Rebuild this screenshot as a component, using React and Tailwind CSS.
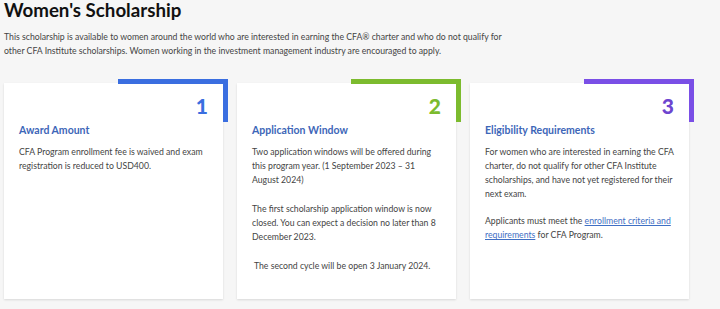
const cards = [
  {
    num: '1',
    title: 'Award Amount',
    accent: 'border-[#3a6ee0]',
    numColor: 'text-[#3a6ee0]',
    body: (
      <p>CFA Program enrollment fee is waived and exam registration is reduced to USD400.</p>
    ),
  },
  {
    num: '2',
    title: 'Application Window',
    accent: 'border-[#7cbb2e]',
    numColor: 'text-[#7cbb2e]',
    body: (
      <>
        <p>Two application windows will be offered during this program year. (1 September 2023 – 31 August 2024)</p>
        <p className="mt-[15px]">The first scholarship application window is now closed. You can expect a decision no later than 8 December 2023.</p>
        <p className="mt-[15px]">&nbsp;The second cycle will be open 3 January 2024.</p>
      </>
    ),
  },
  {
    num: '3',
    title: 'Eligibility Requirements',
    accent: 'border-[#7a4fe6]',
    numColor: 'text-[#6d45cf]',
    body: (
      <>
        <p>For women who are interested in earning the CFA charter, do not qualify for other CFA Institute scholarships, and have not yet registered for their next exam.</p>
        <p className="mt-[13px]">
          Applicants must meet the{' '}
          <a href="#" className="text-[#3f6fc4] underline">enrollment criteria and requirements</a>{' '}
          for CFA Program.
        </p>
      </>
    ),
  },
];

export default function App() {
  return (
    <div className="h-[309px] w-[720px] overflow-hidden bg-[#f6f6f6] font-['Lato',sans-serif]">
      <div className="px-[4px]">
        <h1 className="text-[18.7px] font-bold leading-[20px] text-[#111]">Women's Scholarship</h1>
        <p className="mt-[10px] max-w-[500px] text-[8.7px] leading-[13.5px] text-[#444]">
          This scholarship is available to women around the world who are interested in earning the CFA® charter and who do not qualify for other CFA Institute scholarships. Women working in the investment management industry are encouraged to apply.
        </p>
      </div>

      <div className="mt-[26px] flex gap-[14px] pl-[4px]">
        {cards.map((c) => (
          <div key={c.num} className="relative h-[216px] w-[219px] bg-white px-[15px] pt-[13px] shadow-[0_1px_2px_rgba(0,0,0,0.12)]">
            {/* corner bracket */}
            <div className={`absolute -top-[4px] -right-[5px] h-[43px] w-[110px] border-t-[5px] border-r-[5px] ${c.accent}`} />
            <div className={`text-right text-[21px] font-black leading-[20px] ${c.numColor}`}>{c.num}</div>
            <h3 className="mt-[6px] text-[10.5px] font-bold leading-[16px] text-[#3d66b8]">{c.title}</h3>
            <div className="mt-[7px] text-[8.7px] leading-[14px] text-[#444]">{c.body}</div>
          </div>
        ))}
      </div>
    </div>
  );
}
